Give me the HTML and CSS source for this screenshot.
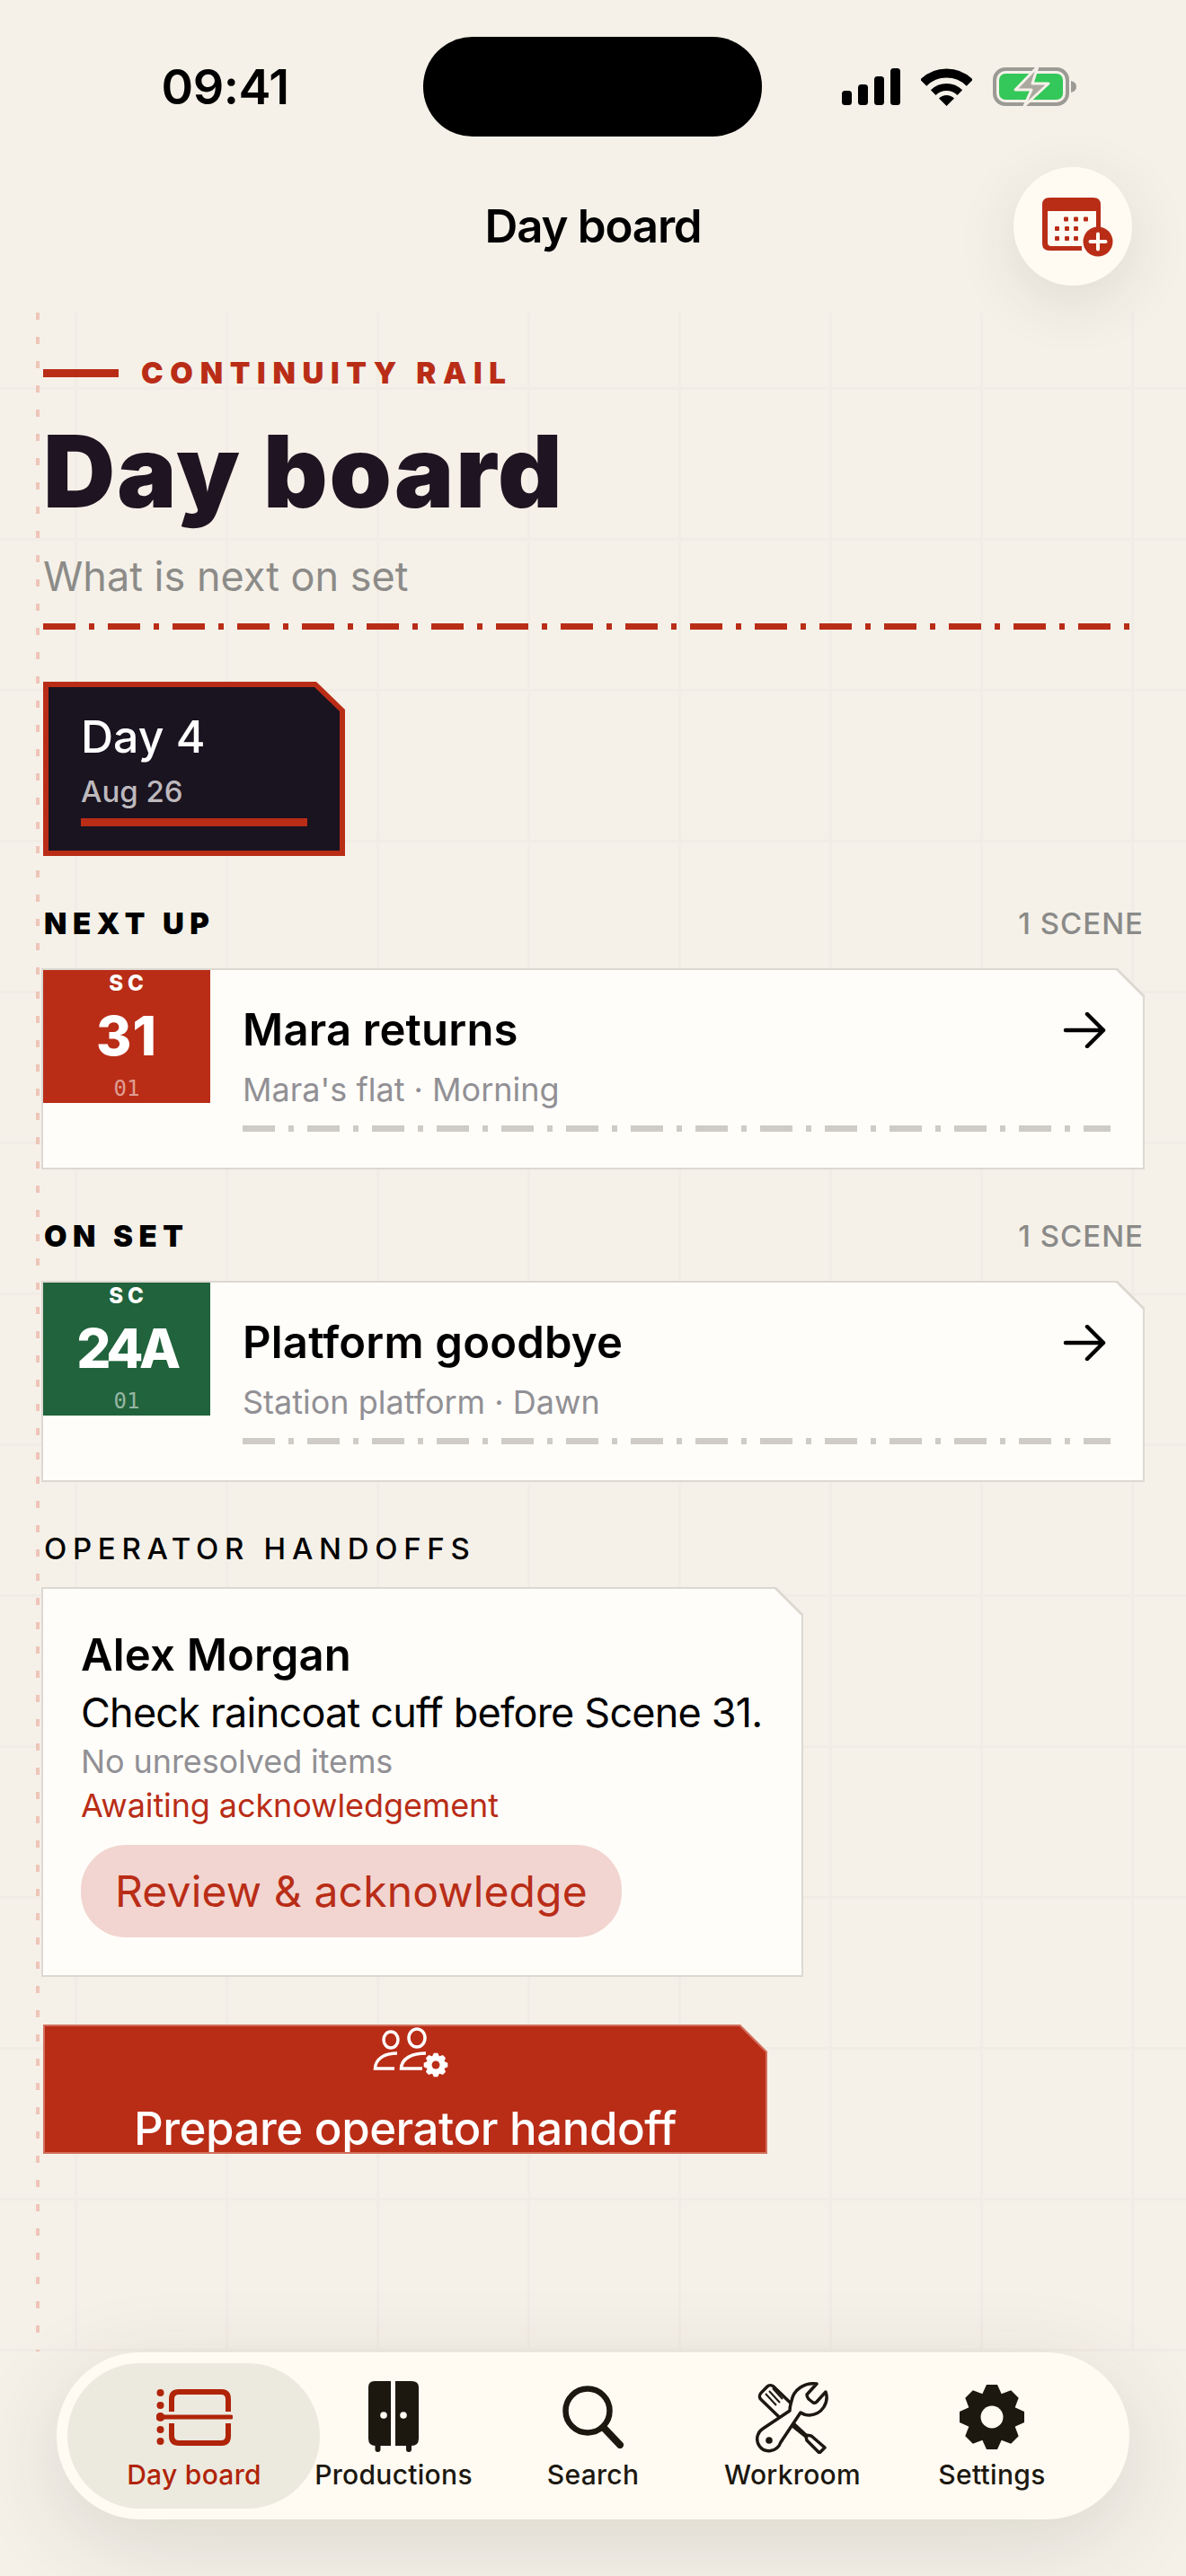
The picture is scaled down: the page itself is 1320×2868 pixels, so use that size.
FILE: index.html
```html
<!DOCTYPE html>
<html lang="en">
<head>
    <meta charset="UTF-8">
    <meta name="viewport" content="width=device-width, initial-scale=1.0">
    <title>Day board</title>
    <link rel="stylesheet" href="styles.css">
</head>
<body>
<div class="screen">
    <div class="status">
        <div class="status-time">09:41</div>
        <div class="island"></div>
        <div class="status-icons">
            <svg width="65" height="41" viewBox="0 0 65 41" fill="#000">
                <rect x="0" y="25" width="11" height="16" rx="3.5"/>
                <rect x="18" y="18" width="11" height="23" rx="3.5"/>
                <rect x="36" y="9" width="11" height="32" rx="3.5"/>
                <rect x="54" y="0" width="11" height="41" rx="3.5"/>
            </svg>
            <svg width="57" height="42" viewBox="0 0 57 42">
                <path d="M2.7 16.2A36.5 36.5 0 0 1 54.3 16.2" fill="none" stroke="#000" stroke-width="10"/>
                <path d="M13.7 27.2A21 21 0 0 1 43.3 27.2" fill="none" stroke="#000" stroke-width="8"/>
                <path d="M28.5 42L20 33.5A12 12 0 0 1 37 33.5Z" fill="#000"/>
            </svg>
            <svg class="battery" width="93" height="43" viewBox="0 0 93 43">
                <rect x="2" y="2" width="81" height="39" rx="12" fill="none" stroke="#9c9a94" stroke-width="4"/>
                <rect x="7" y="7" width="71" height="29" rx="7" fill="#34c759"/>
                <path d="M87 15C91 16 93 18 93 21.500C93 25 91 27 87 28Z" fill="#9c9a94"/>
                <path d="M50 -1L25 25H43L35 43L62 18H44Z" fill="#aaa89f" stroke="#f5f1e9" stroke-width="3" stroke-linejoin="round"/>
            </svg>
        </div>
    </div>

    <div class="topbar">
        <div class="topbar-title">Day board</div>
        <div class="round-btn">
            <svg width="80" height="68" viewBox="0 0 80 68">
                <path d="M8 0H57Q65 0 65 8V40H60V15H6V50Q6 54 10 54H44V59H8Q0 59 0 51V8Q0 0 8 0Z" fill="#b92d17"/>
                <g fill="#b92d17">
                    <rect x="24" y="21.500" width="5" height="5" rx="1"/><rect x="35" y="21.500" width="5" height="5" rx="1"/><rect x="46" y="21.500" width="5" height="5" rx="1"/>
                    <rect x="14" y="32" width="5" height="5" rx="1"/><rect x="25" y="32" width="5" height="5" rx="1"/><rect x="35" y="32" width="5" height="5" rx="1"/>
                    <rect x="14" y="43" width="5" height="5" rx="1"/><rect x="25" y="43" width="5" height="5" rx="1"/><rect x="35" y="43" width="5" height="5" rx="1"/>
                </g>
                <circle cx="62" cy="49" r="16.500" fill="#b92d17"/>
                <path d="M62 40.500V57.500M53.500 49H70.500" stroke="#fffbf3" stroke-width="4" stroke-linecap="round"/>
            </svg>
        </div>
    </div>

    <div class="content">
        <div class="eyebrow"><span class="eyebrow-bar"></span>CONTINUITY RAIL</div>
        <h1 class="page-title">Day board</h1>
        <div class="page-sub">What is next on set</div>
        <div class="rule"></div>

        <div class="day-chip">
            <div class="day-chip-inner">
                <div class="day-name">Day 4</div>
                <div class="day-date">Aug 26</div>
                <div class="day-bar"></div>
            </div>
        </div>

        <div class="section-head first">
            <span class="section-title">NEXT UP</span>
            <span class="section-count">1 SCENE</span>
        </div>
        <div class="notch-card">
            <div class="scene">
                <div class="slate red">
                    <div class="slate-sc">SC</div>
                    <div class="slate-num">31</div>
                    <div class="slate-take">01</div>
                </div>
                <div class="scene-body">
                    <div class="scene-row">
                        <div class="scene-title">Mara returns</div>
                        <svg class="arrow" width="48" height="40" viewBox="0 0 48 40" fill="none" stroke="#000" stroke-width="4.500" stroke-linecap="round" stroke-linejoin="round"><path d="M3 20H45M27 2L45 20L27 38"/></svg>
                    </div>
                    <div class="scene-sub">Mara's flat · Morning</div>
                    <div class="rule grey"></div>
                </div>
            </div>
        </div>

        <div class="section-head">
            <span class="section-title">ON SET</span>
            <span class="section-count">1 SCENE</span>
        </div>
        <div class="notch-card">
            <div class="scene">
                <div class="slate green">
                    <div class="slate-sc">SC</div>
                    <div class="slate-num long">24A</div>
                    <div class="slate-take">01</div>
                </div>
                <div class="scene-body">
                    <div class="scene-row">
                        <div class="scene-title">Platform goodbye</div>
                        <svg class="arrow" width="48" height="40" viewBox="0 0 48 40" fill="none" stroke="#000" stroke-width="4.500" stroke-linecap="round" stroke-linejoin="round"><path d="M3 20H45M27 2L45 20L27 38"/></svg>
                    </div>
                    <div class="scene-sub">Station platform · Dawn</div>
                    <div class="rule grey"></div>
                </div>
            </div>
        </div>

        <div class="section-head">
            <span class="section-title light">OPERATOR HANDOFFS</span>
        </div>
        <div class="notch-card handoff">
            <div class="handoff-inner">
                <div class="handoff-name">Alex Morgan</div>
                <div class="handoff-note">Check raincoat cuff before Scene 31.</div>
                <div class="handoff-meta">No unresolved items</div>
                <div class="handoff-meta warn">Awaiting acknowledgement</div>
                <div class="pill">Review &amp; acknowledge</div>
            </div>
        </div>

        <div class="cta">
            <div class="cta-inner">
                <svg width="88" height="60" viewBox="0 0 88 60">
                    <g fill="none" stroke="#fff" stroke-width="3.500">
                        <ellipse cx="21" cy="15" rx="8" ry="9"/>
                        <ellipse cx="50" cy="13" rx="9" ry="10"/>
                        <path d="M28 30C14 30 4 36 3.500 47H25"/>
                        <path d="M60 30C44 30 33 36 32.500 47H56"/>
                    </g>
                    <g transform="translate(71 43) scale(.37)" fill="#fff">
                        <path d="M-11-25L-6-36H6L11-25V25L6 36H-6L-11 25Z"/>
                        <path transform="rotate(45)" d="M-11-25L-6-36H6L11-25V25L6 36H-6L-11 25Z"/>
                        <path transform="rotate(90)" d="M-11-25L-6-36H6L11-25V25L6 36H-6L-11 25Z"/>
                        <path transform="rotate(135)" d="M-11-25L-6-36H6L11-25V25L6 36H-6L-11 25Z"/>
                        <circle r="12" fill="#b92d17"/>
                    </g>
                </svg>
                <div class="cta-label">Prepare operator handoff</div>
            </div>
        </div>
    </div>

    <div class="tabbar">
        <div class="tab active">
            <div class="tab-icon">
                <svg width="85" height="63" viewBox="0 0 85 63">
                    <g fill="#b02408">
                        <circle cx="4.500" cy="4" r="4"/><circle cx="4.500" cy="18" r="4"/><circle cx="4.500" cy="31" r="5"/><circle cx="4.500" cy="45" r="4"/><circle cx="4.500" cy="58" r="4"/>
                    </g>
                    <g fill="none" stroke="#b02408">
                        <path d="M4 31H83" stroke-width="5" stroke-linecap="round"/>
                        <path d="M17 25V11Q17 3 25 3H72Q80 3 80 11V25" stroke-width="6"/>
                        <path d="M17 38V52Q17 60 25 60H72Q80 60 80 52V38" stroke-width="6"/>
                    </g>
                </svg>
            </div>
            <div class="tab-label">Day board</div>
        </div>
        <div class="tab">
            <div class="tab-icon">
                <svg width="58" height="80" viewBox="0 0 58 80" fill="#1c1810">
                    <path d="M26 0H8Q1 0 1 7V64Q1 72 9 72H26Z"/>
                    <path d="M31 0H49Q57 0 57 7V64Q57 72 49 72H31Z"/>
                    <rect x="8.500" y="68" width="6" height="11" rx="3"/>
                    <rect x="43" y="68" width="6" height="11" rx="3"/>
                    <circle cx="18" cy="38" r="3.800" fill="#fffbf3"/>
                    <circle cx="40" cy="38" r="3.800" fill="#fffbf3"/>
                </svg>
            </div>
            <div class="tab-label">Productions</div>
        </div>
        <div class="tab">
            <div class="tab-icon">
                <svg width="68" height="70" viewBox="0 0 68 70" fill="none" stroke="#1c1810">
                    <circle cx="28" cy="28" r="24.500" stroke-width="6.500"/>
                    <path d="M46 47L64 66" stroke-width="8" stroke-linecap="round"/>
                </svg>
            </div>
            <div class="tab-label">Search</div>
        </div>
        <div class="tab">
            <div class="tab-icon">
                <svg width="82" height="81" viewBox="0 0 82 81" fill="none" stroke="#1c1810" stroke-width="3.500" stroke-linejoin="round">
                    <rect x="-19" y="-10" width="38" height="20" rx="5" transform="translate(23 23) rotate(44)"/>
                    <path d="M11 14L23 27M15 11L27 24M19 8L30 20" stroke-width="2"/>
                    <path d="M42 47L56 60L62 61L77 74L71 80L57 66L56 62L41 50"/>
                    <path d="M68 3L57 15Q57 18 59 20L64 24Q66 25 68 23L78 12C82 24 74 37 60 38C56 38 53 37 50 35L28 68C24 79 10 81 4 72C-1 64 3 56 8 53L38 33C38 28 39 26 40 22C42 10 54 1 68 3Z" fill="#fffbf3"/>
                    <circle cx="15" cy="66" r="3.800" fill="#1c1810" stroke="none"/>
                </svg>
            </div>
            <div class="tab-label">Workroom</div>
        </div>
        <div class="tab">
            <div class="tab-icon">
                <svg width="74" height="74" viewBox="-37 -37 74 74" fill="#1c1810">
                    <path d="M-11-25L-6-36H6L11-25V25L6 36H-6L-11 25Z"/>
                    <path transform="rotate(45)" d="M-11-25L-6-36H6L11-25V25L6 36H-6L-11 25Z"/>
                    <path transform="rotate(90)" d="M-11-25L-6-36H6L11-25V25L6 36H-6L-11 25Z"/>
                    <path transform="rotate(135)" d="M-11-25L-6-36H6L11-25V25L6 36H-6L-11 25Z"/>
                    <circle r="26"/>
                    <circle r="12.500" fill="#fffbf3"/>
                </svg>
            </div>
            <div class="tab-label">Settings</div>
        </div>
    </div>
</div>
</body>
</html>
```

FILE: styles.css
```css
* { box-sizing: border-box; }
html, body { margin: 0; padding: 0; }
body {
    font-family: Inter, "Noto Sans", sans-serif;
    background: #f5f1e9;
    color: #000;
}
.screen {
    position: relative;
    width: 1320px;
    height: 2868px;
    overflow: hidden;
    background: #f5f1e9;
}

/* status bar */
.status { display: flex; height: 172px; padding-top: 41px; }
.status-time {
    width: 471px;
    padding-left: 30px;
    text-align: center;
    font-size: 54px;
    font-weight: 600;
    letter-spacing: -0.5px;
    line-height: 111px;
}
.island { width: 377px; height: 111px; border-radius: 55px; background: #000; }
.status-icons { display: flex; align-items: center; gap: 23px; height: 111px; margin-left: 89px; }
.battery { overflow: visible; }

/* top bar */
.topbar {
    position: relative;
    z-index: 2;
    height: 176px;
    display: flex;
    align-items: center;
    justify-content: center;
    padding-bottom: 16px;
}
.topbar-title { font-size: 51px; font-weight: 600; letter-spacing: -1.2px; line-height: 60px; }
.round-btn {
    position: absolute;
    top: 14px;
    right: 60px;
    width: 132px;
    height: 132px;
    border-radius: 50%;
    background: #fffbf3;
    box-shadow: 0 18px 70px rgba(50, 40, 20, 0.11);
    display: flex;
    align-items: center;
    justify-content: center;
    padding: 3px 0 0 11px;
}

/* scrolling content */
.content {
    position: relative;
    height: 2270px;
    padding: 47px 46px 0 48px;
    background-color: #f5f1e9;
    background-image:
        linear-gradient(90deg, #f1ece5 0, #f1ece5 3px, transparent 3px),
        linear-gradient(#f1ece5 0, #f1ece5 3px, transparent 3px);
    background-size: 168px 168px;
    background-position: 83px 83px;
}
.content::before {
    content: "";
    position: absolute;
    left: 40px;
    top: 0;
    bottom: 0;
    width: 4px;
    background: repeating-linear-gradient(180deg, #eec5b8 0, #eec5b8 8px, transparent 8px, transparent 27px);
}

.eyebrow {
    display: flex;
    align-items: center;
    height: 40px;
    font-size: 33px;
    font-weight: 900;
    letter-spacing: 7.700px;
    color: #b92d17;
}
.eyebrow-bar { width: 84px; height: 9px; margin-right: 25px; background: #b92d17; }
.page-title {
    margin: 30px 0 0;
    font-size: 111px;
    font-weight: 900;
    letter-spacing: 2px;
    line-height: 120px;
    color: #1f1421;
}
.page-sub { margin-top: 27px; font-size: 45px; line-height: 60px; color: #8c8b88; }
.rule {
    margin-top: 22px;
    height: 7px;
    width: 1212px;
    background: repeating-linear-gradient(90deg, #b92d17 0, #b92d17 36px, transparent 36px, transparent 51px, #b92d17 51px, #b92d17 57px, transparent 57px, transparent 72px);
}
.rule.grey {
    margin-top: 16px;
    width: 966px;
    background: repeating-linear-gradient(90deg, #cfcbc6 0, #cfcbc6 36px, transparent 36px, transparent 51px, #cfcbc6 51px, #cfcbc6 57px, transparent 57px, transparent 72px);
}

/* day chip */
.day-chip {
    width: 336px;
    height: 194px;
    margin-top: 58px;
    padding: 6px;
    background: #b92d17;
    clip-path: polygon(0 0, 304px 0, 100% 31px, 100% 100%, 0 100%);
}
.day-chip-inner {
    height: 100%;
    padding: 25px 36px 0;
    background: #1a1320;
    clip-path: polygon(0 0, 296px 0, 100% 27px, 100% 100%, 0 100%);
}
.day-name { font-size: 50px; font-weight: 500; line-height: 60px; color: #fff; }
.day-date { margin-top: 11px; font-size: 33px; font-weight: 500; line-height: 40px; color: #bdb9bd; }
.day-bar { width: 252px; height: 9px; margin-top: 10px; background: #b92d17; }

/* section headers */
.section-head {
    display: flex;
    justify-content: space-between;
    align-items: center;
    height: 40px;
    margin-top: 54px;
    padding-right: 1px;
    padding-left: 1px;
}
.section-head.first { margin-top: 55px; }
.section-title { font-size: 33px; font-weight: 900; line-height: 40px; letter-spacing: 6.500px; }
.section-title.light { font-weight: 500; letter-spacing: 6.700px; }
.section-count { font-size: 33px; font-weight: 500; line-height: 40px; letter-spacing: 1px; color: #8a8a88; }

/* notched cards */
.notch-card {
    margin: 30px 0 0 -2px;
    padding: 2px;
    background: #dcd8d2;
    clip-path: polygon(0 0, calc(100% - 30px) 0, 100% 30px, 100% 100%, 0 100%);
}
.scene {
    display: flex;
    height: 220px;
    background: #fffdf9;
    clip-path: polygon(0 0, calc(100% - 30px) 0, 100% 30px, 100% 100%, 0 100%);
}
.slate { width: 186px; height: 148px; flex: none; text-align: center; color: #fff; }
.slate.red { background: #b92d17; }
.slate.green { background: #20633c; }
.slate-sc { font-size: 24px; font-weight: 800; line-height: 24px; letter-spacing: 5px; padding-top: 3px; padding-left: 4px; height: 27px; }
.slate-num { font-size: 60px; font-weight: 800; letter-spacing: 1px; line-height: 72px; margin-top: 10px; }
.slate-num.long { letter-spacing: -4.500px; }
.slate-take {
    font-family: "DejaVu Sans Mono", monospace;
    font-size: 24px;
    line-height: 28px;
    margin-top: 9px;
    color: rgba(255, 255, 255, 0.55);
}
.scene-body { flex: 1; padding: 37px 36px 0; }
.scene-row { display: flex; justify-content: space-between; align-items: center; height: 60px; }
.scene-title { font-size: 49px; font-weight: 600; letter-spacing: 0.2px; line-height: 60px; }
.arrow { margin-right: 5px; }
.scene-sub { margin-top: 12px; font-size: 36px; line-height: 48px; color: #919095; }

/* handoff */
.handoff { width: 848px; margin-top: 23px; }
.handoff-inner {
    height: 430px;
    padding: 44px 42px 0;
    background: #fffdf9;
    clip-path: polygon(0 0, calc(100% - 30px) 0, 100% 30px, 100% 100%, 0 100%);
}
.handoff-name { font-size: 49px; font-weight: 600; letter-spacing: 0.2px; line-height: 60px; }
.handoff-note { margin-top: 6px; font-size: 45px; letter-spacing: -0.8px; line-height: 56px; white-space: nowrap; }
.handoff-meta { margin-top: 3px; font-size: 36px; letter-spacing: -0.1px; line-height: 46px; color: #919095; }
.handoff-meta.warn { color: #b92d17; }
.pill {
    display: inline-flex;
    align-items: center;
    height: 103px;
    margin-top: 21px;
    padding: 0 38px;
    border-radius: 50px;
    background: #f2d5d0;
    font-size: 48px;
    letter-spacing: 0.15px;
    color: #b92d17;
}

/* main action */
.cta {
    width: 806px;
    height: 144px;
    margin-top: 53px;
    padding: 2px;
    background: #d26f5c;
    clip-path: polygon(0 0, calc(100% - 30px) 0, 100% 30px, 100% 100%, 0 100%);
}
.cta-inner {
    height: 100%;
    display: flex;
    flex-direction: column;
    align-items: center;
    background: #b92d17;
    clip-path: polygon(0 0, calc(100% - 29px) 0, 100% 29px, 100% 100%, 0 100%);
}
.cta-inner svg { flex: none; margin-left: 13px; }
.cta-label { flex: none; margin-top: 24px; font-size: 51px; font-weight: 500; letter-spacing: -0.5px; line-height: 60px; color: #fff; }

/* tab bar */
.tabbar {
    position: absolute;
    left: 63px;
    top: 2619px;
    width: 1194px;
    height: 186px;
    padding: 0 42px;
    display: grid;
    grid-template-columns: repeat(5, 222px);
    border-radius: 93px;
    background: #fffbf3;
    box-shadow: 0 24px 100px rgba(50, 40, 20, 0.13);
}
.tab { position: relative; padding-top: 30px; text-align: center; color: #1c1810; }
.tab.active { color: #b02408; }
.tab.active::before {
    content: "";
    position: absolute;
    left: -30px;
    right: -29px;
    top: 12px;
    bottom: 12px;
    border-radius: 81px;
    background: #ece9df;
}
.tab-icon {
    position: relative;
    height: 84px;
    display: flex;
    align-items: center;
    justify-content: center;
}
.tab-label {
    position: relative;
    margin-top: 2px;
    font-size: 30px;
    font-weight: 500;
    letter-spacing: 0.3px;
    line-height: 40px;
}
```
